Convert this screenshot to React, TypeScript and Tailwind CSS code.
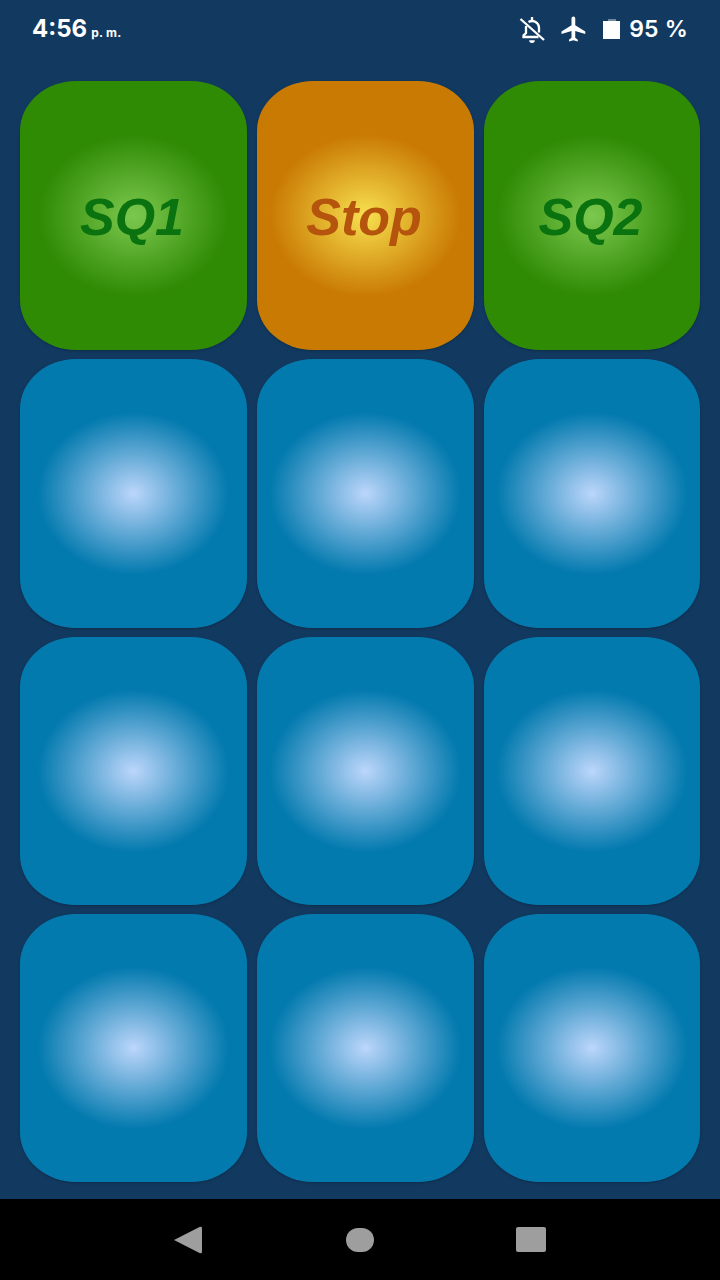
const PADS = [
  { label: "SQ1", kind: "green" },
  { label: "Stop", kind: "orange" },
  { label: "SQ2", kind: "green" },
  { label: "", kind: "blue" },
  { label: "", kind: "blue" },
  { label: "", kind: "blue" },
  { label: "", kind: "blue" },
  { label: "", kind: "blue" },
  { label: "", kind: "blue" },
  { label: "", kind: "blue" },
  { label: "", kind: "blue" },
  { label: "", kind: "blue" },
];

const PAD_STYLE: Record<string, string> = {
  green:
    "bg-[radial-gradient(ellipse_95px_81px_at_center,#7cc84f_0%,#2f8a04_100%)] text-[#0a720e]",
  orange:
    "bg-[radial-gradient(ellipse_95px_81px_at_center,#f8e050_0%,#c97a02_100%)] text-[#b5540c]",
  blue: "bg-[radial-gradient(ellipse_95px_81px_at_center,#bcd6fb_0%,#037aae_100%)]",
};

function BellOffIcon() {
  return (
    <svg viewBox="0 0 40 36" className="w-[40px] h-[36px] fill-none stroke-white stroke-[2.3]">
      <path d="M8.5 8 L32 29" />
      <path d="M14 15 V22 L11.5 24.5 V26 H26.5" />
      <path d="M16.5 11 A7 7 0 0 1 27 16.5 V21.5" />
      <path d="M20 6 V9" />
      <path d="M17.2 29.2 h5.6 a2.8 2.8 0 0 1 -5.6 0 z" className="fill-white stroke-none" />
    </svg>
  );
}

function StatusBar() {
  return (
    <div className="h-[58px] flex items-center justify-between pl-[32px] pr-[32px] text-white font-['Inter',sans-serif]">
      <div className="flex items-baseline gap-[4px]">
        <span className="text-[24px] font-bold leading-none">4:56</span>
        <span className="text-[12px] font-bold leading-none tracking-[0.3px]">p. m.</span>
      </div>
      <div className="flex items-center">
        <BellOffIcon />
        <svg viewBox="0 0 24 24" className="w-[30px] h-[30px] fill-white ml-[7px]">
          <path d="M21 16v-2l-8-5V3.5c0-.83-.67-1.5-1.5-1.5S10 2.67 10 3.5V9l-8 5v2l8-2.5V19l-2 1.5V22l3.5-1 3.5 1v-1.5L13 19v-5.5l8 2.5z" />
        </svg>
        <div className="flex flex-col items-center ml-[14px]">
          <div className="w-[8px] h-[2px] bg-white/40" />
          <div className="w-[17px] h-[18px] bg-white" />
        </div>
        <span className="ml-[9px] text-[23px] font-semibold leading-none tracking-[0.2px]">95 %</span>
      </div>
    </div>
  );
}

export default function App() {
  return (
    <div className="w-[720px] h-[1280px] flex flex-col bg-[#123a61]">
      <StatusBar />
      <div className="flex-1 pt-[23px] pl-[20px]">
        <div className="grid grid-cols-[227px_217px_216px] grid-rows-[269px_269px_268px_268px] gap-x-[10px] gap-y-[9px]">
          {PADS.map((pad, i) => (
            <div
              key={i}
              className={`rounded-[56px/50px] flex items-center justify-center pt-[3px] pr-[3px] shadow-[0_1px_3px_rgba(0,0,0,0.25)] italic font-bold text-[52px] font-['Liberation_Sans',sans-serif] ${PAD_STYLE[pad.kind]}`}
            >
              {pad.label}
            </div>
          ))}
        </div>
      </div>
      <div className="h-[81px] bg-black flex items-center justify-center">
        <div className="flex items-center gap-[143px] pl-[1px]">
          <svg viewBox="0 0 28 28" className="w-[28px] h-[28px] fill-[#9e9e9e] -translate-x-[1px]">
            <path d="M0 14 L26 .8 Q28 .5 28 2 L28 26 Q28 27.5 26 27.2 Z" />
          </svg>
          <div className="w-[28px] h-[24px] rounded-full bg-[#9e9e9e]" />
          <div className="w-[30px] h-[25px] rounded-[2px] bg-[#9e9e9e] -translate-x-[1px]" />
        </div>
      </div>
    </div>
  );
}
